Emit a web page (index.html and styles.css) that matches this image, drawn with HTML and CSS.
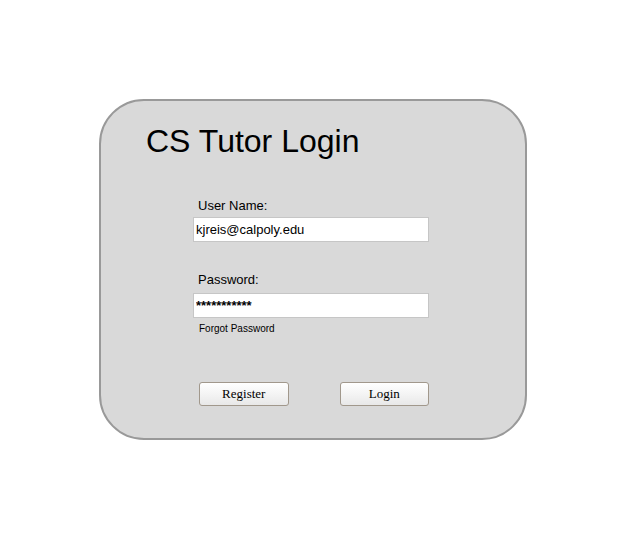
FILE: index.html
```html
<!DOCTYPE html>
<html lang="en">
<head>
<meta charset="utf-8">
<title>CS Tutor Login</title>
<link rel="stylesheet" href="styles.css">
</head>
<body>
<div class="card">
  <h1 class="title">CS Tutor Login</h1>
  <form class="form">
    <label class="label label-user" for="user">User Name:</label>
    <input class="field field-user" id="user" type="text" value="kjreis@calpoly.edu">
    <label class="label label-pass" for="pass">Password:</label>
    <input class="field field-pass" id="pass" type="text" value="***********">
    <div class="forgot">Forgot Password</div>
    <div class="buttons">
      <button class="btn" type="button">Register</button>
      <button class="btn" type="button">Login</button>
    </div>
  </form>
</div>
</body>
</html>
```
FILE: styles.css
```css
* { box-sizing: border-box; }

html, body {
  margin: 0;
  padding: 0;
  background: #ffffff;
}

body {
  font-family: "Liberation Sans", Arial, Helvetica, sans-serif;
  color: #000;
}

.card {
  margin: 99px 0 0 99px;
  width: 428px;
  border: 2px solid #999999;
  border-radius: 45px;
  background: #d9d9d9;
  padding: 22px 0 32px 0;
}

.title {
  margin: 0 0 0 45px;
  font-size: 32px;
  line-height: 37px;
  font-weight: normal;
}

.form {
  margin: 0 0 0 92px;
  width: 236px;
  display: flex;
  flex-direction: column;
}

.label {
  display: block;
  font-size: 13px;
  line-height: 15px;
  padding-left: 5px;
}

.label-user { margin-top: 38px; }
.label-pass { margin-top: 30px; }

.field {
  display: block;
  width: 236px;
  height: 25px;
  margin: 0;
  padding: 0 2px;
  border: 1px solid #c6c6c6;
  background: #ffffff;
  font-family: "Liberation Sans", Arial, Helvetica, sans-serif;
  font-size: 13px;
  line-height: 15px;
  color: #000;
  outline: none;
}

.field-user { margin-top: 4px; }
.field-pass { margin-top: 6px; font-weight: bold; }

.forgot {
  margin-top: 5px;
  padding-left: 6px;
  font-size: 10px;
  line-height: 12px;
}

.buttons {
  margin-top: 47px;
  padding-left: 6px;
  display: flex;
  gap: 51px;
}

.btn {
  width: 90px;
  height: 24px;
  margin: 0;
  padding: 0 0 2px 0;
  border: 1px solid #a1988c;
  border-radius: 3px;
  background: linear-gradient(#ffffff, #f4f4f4 50%, #e8e8e8);
  font-family: "Liberation Serif", "Times New Roman", serif;
  font-size: 13px;
  line-height: 15px;
  color: #000;
}
```
